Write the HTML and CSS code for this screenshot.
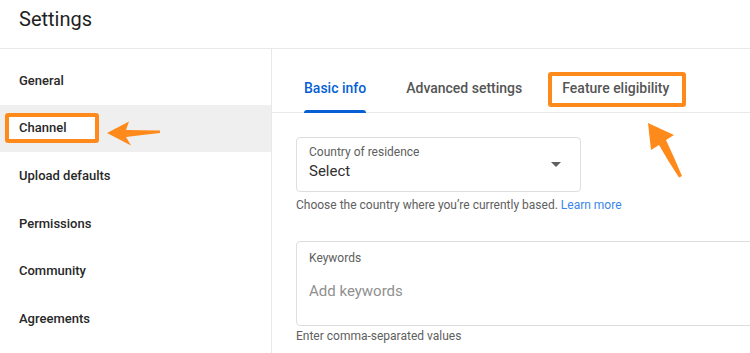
FILE: index.html
```html
<!DOCTYPE html>
<html lang="en">
<head>
    <meta charset="UTF-8">
    <meta name="viewport" content="width=device-width, initial-scale=1.0">
    <title>Settings</title>
    <link rel="stylesheet" href="styles.css">
</head>
<body>
    <div class="header">Settings</div>
    <div class="main">
        <div class="sidebar">
            <div class="item">General</div>
            <div class="item active">
                <span class="mark">Channel</span>
                <svg class="arrow-left" width="56" height="28" viewBox="0 0 56 28">
                    <path d="M1 14 L23 2.5 L20 11 Q36 11 54 11.5 L54 14 Q36 16 20 18 L25 26.5 Z" fill="#ff8a1c"/>
                </svg>
            </div>
            <div class="item">Upload defaults</div>
            <div class="item">Permissions</div>
            <div class="item">Community</div>
            <div class="item">Agreements</div>
        </div>

        <div class="content">
            <div class="tabs">
                <div class="tab"><span class="tab-label selected">Basic info</span></div>
                <div class="tab"><span class="tab-label">Advanced settings</span></div>
                <div class="tab">
                    <span class="tab-label">
                        Feature eligibility
                        <span class="callout"></span>
                        <svg class="arrow-up" width="40" height="58" viewBox="0 0 40 58">
                            <path d="M2 2 L28 14 L20 19 Q28 36 36 55 L33 56.5 Q22 40 13 24 L5 29 Z" fill="#ff8a1c"/>
                        </svg>
                    </span>
                </div>
            </div>

            <div class="form">
                <div class="field select-field">
                    <div class="field-text">
                        <div class="field-label">Country of residence</div>
                        <div class="field-value">Select</div>
                    </div>
                    <span class="caret"></span>
                </div>
                <div class="hint">Choose the country where you’re currently based. <a href="#" class="link">Learn more</a></div>

                <div class="field keywords-field">
                    <div class="field-label">Keywords</div>
                    <div class="field-placeholder">Add keywords</div>
                </div>
                <div class="hint">Enter comma-separated values</div>
            </div>
        </div>
    </div>
</body>
</html>
```

FILE: styles.css
```css
body {
    margin: 0;
    font-family: Roboto, "Liberation Sans", Arial, sans-serif;
    background: #fff;
    color: #0d0d0d;
    width: 750px;
    height: 353px;
    overflow: hidden;
}

.header {
    height: 48px;
    line-height: 38px;
    padding-left: 19px;
    font-size: 20px;
    color: #1f1f1f;
    border-bottom: 1px solid #e8e8e8;
}

.main {
    display: flex;
    height: 304px;
}

.sidebar {
    width: 271px;
    flex-shrink: 0;
    border-right: 1px solid #e8e8e8;
    padding-top: 8px;
}

.item {
    display: flex;
    align-items: center;
    height: 47.5px;
    padding-left: 19px;
    font-size: 13px;
    font-weight: 500;
    color: #282828;
}

.item.active {
    background: #efefef;
}

.mark {
    display: inline-block;
    margin-left: -14px;
    padding: 3px 29px 3px 10px;
    line-height: 16px;
    background: #fff;
    border: 4px solid #ff8a1c;
    border-radius: 3px;
}

.arrow-left {
    margin-left: 7px;
    margin-top: 10px;
}

.content {
    flex: 1;
    min-width: 0;
    overflow: hidden;
}

.tabs {
    display: flex;
    align-items: flex-end;
    height: 63px;
    padding-left: 12px;
    border-bottom: 1px solid #e8e8e8;
}

.tab {
    padding: 0 20px;
}

.tab-label {
    position: relative;
    display: block;
    line-height: 18px;
    padding-bottom: 15px;
    font-size: 14px;
    font-weight: 500;
    color: #555;
}

.tab-label.selected {
    color: #065fd4;
}

.tab-label.selected::after {
    content: "";
    position: absolute;
    left: 0;
    right: 0;
    bottom: -1px;
    height: 3px;
    background: #065fd4;
    border-radius: 3px 3px 0 0;
}

.callout {
    position: absolute;
    left: -14px;
    right: -17px;
    top: -7px;
    bottom: 5px;
    border: 4px solid #ff8a1c;
    border-radius: 3px;
}

.arrow-up {
    position: absolute;
    left: 84px;
    top: 42px;
}

.form {
    padding: 24px 0 0 24px;
}

.field {
    border: 1px solid #dedede;
    border-radius: 4px;
    box-sizing: border-box;
}

.select-field {
    display: flex;
    align-items: center;
    width: 285px;
    height: 55px;
    padding: 0 19px 0 12px;
}

.field-text {
    flex: 1;
    align-self: flex-start;
    padding-top: 6px;
}

.field-label {
    font-size: 12px;
    line-height: 16px;
    color: #606060;
}

.field-value {
    font-size: 15px;
    line-height: 20px;
    color: #303030;
    margin-top: 1px;
}

.caret {
    width: 0;
    height: 0;
    border-left: 5px solid transparent;
    border-right: 5px solid transparent;
    border-top: 5px solid #606060;
}

.hint {
    margin-top: 6px;
    font-size: 12px;
    line-height: 14px;
    color: #606060;
}

.link {
    color: #3b86e8;
    text-decoration: none;
}

.keywords-field {
    width: 520px;
    height: 85px;
    margin-top: 29px;
    padding: 8px 12px 0;
}

.field-placeholder {
    margin-top: 15px;
    font-size: 15px;
    line-height: 20px;
    color: #909090;
}

.keywords-field + .hint {
    margin-top: 3px;
}
```
